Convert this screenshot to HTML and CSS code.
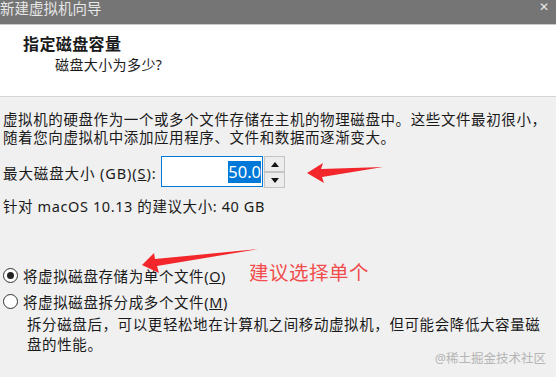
FILE: index.html
```html
<!DOCTYPE html>
<html lang="zh-CN">
<head>
  <meta charset="UTF-8" />
  <title>新建虚拟机向导</title>
  <link rel="stylesheet" href="styles.css">
</head>
<body>
  <div class="dialog">
    <!-- Title bar -->
    <div class="titlebar">
      <span class="title">新建虚拟机向导</span>
      <span class="close">✕</span>
    </div>

    <!-- Header -->
    <div class="header">
      <div class="header-title">指定磁盘容量</div>
      <div class="header-sub">磁盘大小为多少?</div>
    </div>

    <!-- Body -->
    <div class="content">
      <p class="intro">虚拟机的硬盘作为一个或多个文件存储在主机的物理磁盘中。这些文件最初很小，<br>随着您向虚拟机中添加应用程序、文件和数据而逐渐变大。</p>

      <div class="size-row">
        <label class="size-label">最大磁盘大小 (GB)(<u>S</u>):</label>
        <div class="spin">
          <div class="spin-input"><span class="sel">50.0</span></div>
          <div class="spin-btns">
            <div class="spin-btn"><span class="tri up"></span></div>
            <div class="spin-btn"><span class="tri down"></span></div>
          </div>
        </div>
      </div>

      <div class="hint">针对 macOS 10.13 的建议大小: 40 GB</div>

      <div class="options">
        <div class="option">
          <span class="radio checked"></span>
          <span>将虚拟磁盘存储为单个文件(<u>O</u>)</span>
          <span class="note">建议选择单个</span>
        </div>
        <div class="option">
          <span class="radio"></span>
          <span>将虚拟磁盘拆分成多个文件(<u>M</u>)</span>
        </div>
        <p class="option-desc">拆分磁盘后，可以更轻松地在计算机之间移动虚拟机，但可能会降低大容量磁<br>盘的性能。</p>
      </div>
    </div>

    <!-- Annotation arrows -->
    <svg class="arrows" width="556" height="377" viewBox="0 0 556 377">
      <path d="M307 173 L323 163 L321 169 L383 167 L322 177 L324 183 Z" fill="#f2262b"/>
      <path d="M142 265 L154 253 L155 259 L259 249 L157 266 L159 273 Z" fill="#f2262b"/>
    </svg>

    <div class="watermark">@稀土掘金技术社区</div>
  </div>
</body>
</html>
```

FILE: styles.css
```css
body {
  margin: 0;
  font-family: "Noto Sans", "Noto Sans CJK SC", sans-serif;
  color: #1a1a1a;
}

.dialog {
  position: relative;
  width: 556px;
  height: 377px;
  overflow: hidden;
  background: #f0f0f0;
}

/* Title bar */
.titlebar {
  height: 24px;
  background: #757575;
  border-bottom: 1px solid #c9c9c9;
  display: flex;
  justify-content: space-between;
  align-items: flex-start;
}

.title {
  font-family: "Noto Sans CJK SC", sans-serif;
  font-size: 14.5px;
  line-height: 16px;
  color: #e6e6e6;
}

.close {
  font-size: 12px;
  line-height: 13px;
  color: #e8e8e8;
  margin-right: 7px;
}

/* Header */
.header {
  background: #fff;
  height: 72px;
  border-bottom: 1px solid #d4d4d4;
  box-sizing: border-box;
  padding-top: 7px;
}

.header-title {
  font-family: "Noto Sans CJK SC", sans-serif;
  font-weight: 700;
  font-size: 16px;
  line-height: 22px;
  padding-left: 23px;
  letter-spacing: 0.4px;
}

.header-sub {
  font-size: 14px;
  line-height: 20px;
  padding-left: 55px;
  margin-top: 1px;
  letter-spacing: 0.4px;
}

/* Body */
.content {
  padding: 13px 0 0 3px;
  font-size: 14.5px;
  letter-spacing: 0.6px;
}

.intro {
  margin: 0;
  line-height: 18px;
}

.size-row {
  display: flex;
  align-items: center;
  margin-top: 10px;
}

.size-label {
  width: 158px;
  letter-spacing: 0.9px;
}

.spin {
  display: flex;
  letter-spacing: 0;
}

.spin-input {
  width: 99px;
  height: 29px;
  border: 1px solid #0078d7;
  background: #fff;
  display: flex;
  align-items: center;
  justify-content: flex-end;
  padding-right: 1px;
}

.sel {
  background: #0078d7;
  color: #fff;
  font-size: 16.5px;
  line-height: 22px;
}

.spin-btns {
  display: flex;
  flex-direction: column;
  margin-left: 1px;
}

.spin-btn {
  width: 19px;
  height: 14px;
  border: 1px solid #c4c4c4;
  background: #ececec;
  display: flex;
  align-items: center;
  justify-content: center;
}

.tri {
  width: 0;
  height: 0;
  border-left: 4px solid transparent;
  border-right: 4px solid transparent;
}

.tri.up {
  border-bottom: 5px solid #111;
}

.tri.down {
  border-top: 5px solid #111;
}

.hint {
  margin-top: 9px;
  line-height: 18px;
}

.options {
  margin-top: 47px;
}

.option {
  display: flex;
  align-items: center;
  gap: 5px;
  height: 26px;
}

.radio {
  width: 13px;
  height: 13px;
  border: 1px solid #333;
  border-radius: 50%;
  background: #fff;
  box-sizing: content-box;
  position: relative;
}

.radio.checked::after {
  content: "";
  position: absolute;
  left: 3px;
  top: 3px;
  width: 7px;
  height: 7px;
  border-radius: 50%;
  background: #222;
}

.note {
  font-family: "Noto Sans CJK SC", sans-serif;
  color: #f24c4c;
  font-size: 19.5px;
  letter-spacing: 0.5px;
  margin-left: 18px;
  margin-top: -8px;
}

.option-desc {
  margin: 0 0 0 24px;
  line-height: 20px;
}

/* Overlays */
.arrows {
  position: absolute;
  left: 0;
  top: 0;
  pointer-events: none;
}

.watermark {
  position: absolute;
  right: 10px;
  bottom: 10px;
  font-size: 12.5px;
  letter-spacing: 0;
  color: #b5b5b5;
}
```
